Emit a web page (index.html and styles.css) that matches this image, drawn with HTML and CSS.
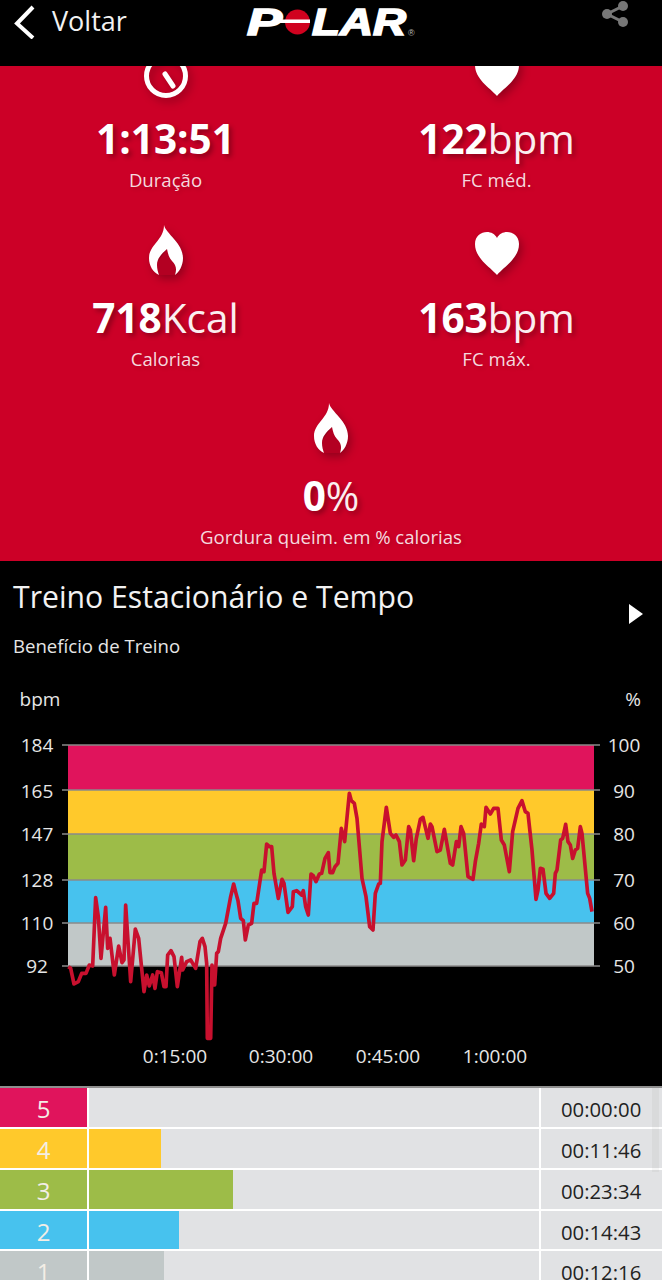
FILE: index.html
```html
<!DOCTYPE html>
<html lang="pt">
<head>
<meta charset="utf-8">
<title>Polar</title>
<link rel="stylesheet" href="styles.css">
</head>
<body>
<div class="page">
  <header class="topbar">
    <div class="back">
      <svg class="chevron" width="22" height="36" viewBox="0 0 22 36"><polyline points="19,4 3,20.5 19,35"/></svg>
      <span>Voltar</span>
    </div>
    <svg class="logo" width="180" height="44" viewBox="240 0 180 44" role="img" aria-label="Polar">
      <text class="logo-letters" x="247" y="35" textLength="35" lengthAdjust="spacingAndGlyphs">P</text>
      <text class="logo-letters" x="312" y="35" textLength="94" lengthAdjust="spacingAndGlyphs">LAR</text>
      <circle class="logo-dot" cx="297.5" cy="22" r="12.5"/>
      <rect class="logo-band" x="276" y="19.5" width="34" height="3.5"/>
      <text class="logo-reg" x="408" y="36">®</text>
    </svg>
    <svg class="share" width="30" height="28" viewBox="0 0 30 28">
      <path d="M22 6 L6 14 L22 22"/>
      <circle cx="22" cy="6" r="5"/><circle cx="6" cy="14" r="5"/><circle cx="22" cy="22" r="5"/>
    </svg>
  </header>

  <section class="stats">
    <div class="stat stat-first">
      <svg class="icon" width="50" height="50" viewBox="0 -5 50 50"><circle class="ring" cx="25" cy="25" r="19.5"/><path class="hand" d="M24 23 L32 35"/></svg>
      <div class="value"><b>1:13:51</b></div>
      <div class="label">Duração</div>
    </div>
    <div class="stat stat-first">
      <svg class="icon" width="50" height="50" viewBox="0 -3 50 50"><path class="solid" d="M25 47 C17 38 3 30 3 16 C3 8 9 4 15 4 C19 4 23 6 25 10 C27 6 31 4 35 4 C41 4 47 8 47 16 C47 30 33 38 25 47Z"/></svg>
      <div class="value"><b>122</b>bpm</div>
      <div class="label">FC méd.</div>
    </div>
    <div class="stat">
      <svg class="icon" width="50" height="50" viewBox="-8 0 50 50"><path class="inner" d="M9 50 L8 38 L18 24 L27 40 L26 50Z"/><path class="solid" d="M15 0 C17 9 34 18 34 33 C34 41 30 47 26 50 C28 44 27 40 23 36 C20 33 19 29 18 24 C12 29 8 34 8 40 C8 44 9 47 10 50 C4 47 0 41 0 33 C0 20 15 15 15 0Z"/></svg>
      <div class="value"><b>718</b>Kcal</div>
      <div class="label">Calorias</div>
    </div>
    <div class="stat">
      <svg class="icon" width="50" height="50" viewBox="0 -3 50 50"><path class="solid" d="M25 47 C17 38 3 30 3 16 C3 8 9 4 15 4 C19 4 23 6 25 10 C27 6 31 4 35 4 C41 4 47 8 47 16 C47 30 33 38 25 47Z"/></svg>
      <div class="value"><b>163</b>bpm</div>
      <div class="label">FC máx.</div>
    </div>
    <div class="stat stat-wide">
      <svg class="icon" width="50" height="50" viewBox="-8 0 50 50"><path class="inner" d="M9 50 L8 38 L18 24 L27 40 L26 50Z"/><path class="solid" d="M15 0 C17 9 34 18 34 33 C34 41 30 47 26 50 C28 44 27 40 23 36 C20 33 19 29 18 24 C12 29 8 34 8 40 C8 44 9 47 10 50 C4 47 0 41 0 33 C0 20 15 15 15 0Z"/></svg>
      <div class="value"><b>0</b>%</div>
      <div class="label">Gordura queim. em % calorias</div>
    </div>
  </section>

  <section class="training">
    <div class="title-row">
      <h2>Treino Estacionário e Tempo</h2>
      <svg class="play" width="14" height="20" viewBox="0 0 14 20"><path d="M0 0 L14 10 L0 20Z"/></svg>
    </div>
    <p class="subtitle">Benefício de Treino</p>
    <svg class="chart" width="662" height="400" viewBox="0 680 662 400">
      <rect class="z5" x="68" y="745" width="526" height="45"/>
      <rect class="z4" x="68" y="790" width="526" height="44"/>
      <rect class="z3" x="68" y="834" width="526" height="46"/>
      <rect class="z2" x="68" y="880" width="526" height="43"/>
      <rect class="z1" x="68" y="923" width="526" height="43"/>
      <g class="gridlines">
        <line x1="62" x2="600" y1="745" y2="745"/>
        <line x1="62" x2="600" y1="790" y2="790"/>
        <line x1="62" x2="600" y1="834" y2="834"/>
        <line x1="62" x2="600" y1="880" y2="880"/>
        <line x1="62" x2="600" y1="923" y2="923"/>
        <line x1="62" x2="600" y1="966" y2="966"/>
      </g>
      <g transform="translate(0 730) scale(0.33333)">
        <polyline class="hr" points="205,710 212,715 222,762 235,755 245,730 258,730 268,705 278,708 287,503 295,560 303,685 317,532 323,655 330,625 343,735 356,648 366,698 372,690 377,525 392,755 406,597 416,625 432,785 440,735 448,768 458,735 465,775 472,725 484,728 492,770 498,770 503,675 513,662 522,680 532,770 545,682 548,720 560,695 572,690 587,715 600,635 607,625 615,650 620,700 622,925 632,925 636,705 644,765 650,670 655,665 662,625 677,580 692,500 701,462 708,490 714,512 722,565 730,572 736,630 745,585 755,580 762,520 770,520 785,420 792,425 800,342 808,350 815,350 822,430 835,505 846,448 852,460 864,547 877,530 880,485 890,482 905,495 910,482 917,530 925,555 933,432 940,437 948,455 958,432 965,430 975,385 985,368 990,428 998,428 1005,410 1014,400 1024,295 1034,335 1048,190 1054,212 1063,220 1071,265 1086,445 1098,500 1109,590 1119,600 1126,490 1136,462 1141,460 1146,335 1159,232 1171,310 1181,322 1188,315 1198,335 1206,405 1216,390 1226,290 1231,300 1241,392 1249,325 1261,268 1269,262 1284,325 1291,282 1296,290 1311,365 1321,360 1333,298 1351,400 1358,405 1369,335 1376,350 1383,290 1391,310 1404,440 1419,448 1426,395 1436,340 1444,282 1453,290 1458,232 1471,252 1481,235 1494,235 1504,330 1513,345 1528,425 1538,305 1554,235 1566,212 1576,245 1584,250 1596,360 1608,508 1614,480 1621,415 1629,418 1638,490 1649,505 1661,490 1666,430 1671,420 1682,330 1688,325 1697,283 1704,335 1711,345 1718,385 1726,360 1733,355 1741,290 1746,310 1763,490 1769,505 1776,545"/>
      </g>
      <g class="axis">
        <text x="40" y="706">bpm</text>
        <text x="633" y="706">%</text>
        <text x="37" y="752">184</text>
        <text x="37" y="798">165</text>
        <text x="37" y="841">147</text>
        <text x="37" y="887">128</text>
        <text x="37" y="930">110</text>
        <text x="37" y="973">92</text>
        <text x="624" y="752">100</text>
        <text x="624" y="798">90</text>
        <text x="624" y="841">80</text>
        <text x="624" y="887">70</text>
        <text x="624" y="930">60</text>
        <text x="624" y="973">50</text>
        <text x="175" y="1063">0:15:00</text>
        <text x="281" y="1063">0:30:00</text>
        <text x="388" y="1063">0:45:00</text>
        <text x="495" y="1063">1:00:00</text>
      </g>
    </svg>
  </section>

  <section class="zones">
    <div class="zone"><div class="num z5">5</div><div class="track"></div><div class="time">00:00:00</div></div>
    <div class="zone"><div class="num z4">4</div><div class="track"><div class="bar z4" style="width:72px"></div></div><div class="time">00:11:46</div></div>
    <div class="zone"><div class="num z3">3</div><div class="track"><div class="bar z3" style="width:144px"></div></div><div class="time">00:23:34</div></div>
    <div class="zone"><div class="num z2">2</div><div class="track"><div class="bar z2" style="width:90px"></div></div><div class="time">00:14:43</div></div>
    <div class="zone"><div class="num z1">1</div><div class="track"><div class="bar z1" style="width:75px"></div></div><div class="time">00:12:16</div></div>
    <div class="scrollthumb"></div>
  </section>
</div>
</body>
</html>
```
FILE: styles.css
```css
* { box-sizing: border-box; }
html, body { margin: 0; padding: 0; background: #000; }
.page {
  width: 662px;
  height: 1280px;
  overflow: hidden;
  font-family: "Open Sans", "Noto Sans", sans-serif;
  color: #fff;
  background: #000;
}

/* top bar */
.topbar {
  height: 66px;
  background: #000;
  position: relative;
  z-index: 2;
  display: flex;
  justify-content: space-between;
  align-items: flex-start;
}
.back {
  display: flex;
  align-items: center;
  gap: 16px;
  padding: 1px 0 0 14px;
  font-size: 27px;
  line-height: 40px;
  color: #f2f2f2;
}
.chevron polyline { fill: none; stroke: #fff; stroke-width: 4; }
.logo { position: absolute; left: 240px; top: 0; }
.logo-letters {
  font-family: "Liberation Sans", sans-serif;
  font-weight: 700;
  font-style: italic;
  font-size: 36px;
  fill: #fff;
  stroke: #fff;
  stroke-width: 1.6;
}
.logo-dot { fill: #d0021f; }
.logo-band { fill: #fff; }
.logo-reg { font-family: "Liberation Sans", sans-serif; font-size: 9px; fill: #bbb; }
.share { margin: 0 31px 0 0; }
.share path { fill: none; stroke: #777; stroke-width: 3; }
.share circle { fill: #777; }

/* red stats panel */
.stats {
  height: 495px;
  overflow: hidden;
  background: #cc0027;
  display: grid;
  grid-template-columns: 331px 331px;
  grid-auto-rows: 178px;
  align-content: start;
  text-align: center;
}
.stat { display: flex; flex-direction: column; align-items: center; margin-top: -19px; }
.stat-first { margin-top: -20px; }
.stat-wide { grid-column: 1 / 3; }
.icon { display: block; overflow: visible; filter: drop-shadow(3px 4px 4px rgba(0,0,0,.28)); flex: none; }
.ring { fill: none; stroke: #fff; stroke-width: 5; }
.hand { fill: none; stroke: #fff; stroke-width: 5; stroke-linecap: round; }
.solid { fill: #fff; }
.inner { fill: #b30022; }
.value {
  margin-top: 16px;
  font-size: 40.5px;
  line-height: 54px;
  font-weight: 400;
  color: #fbeef0;
  text-shadow: 3px 3px 5px rgba(0,0,0,.3);
}
.value b { font-weight: 700; color: #fff; }
.label {
  margin-top: 1px;
  font-size: 18.6px;
  line-height: 26px;
  color: #f6d9df;
  text-shadow: 2px 2px 4px rgba(0,0,0,.15);
}

/* training section */
.training { height: 525px; background: #000; }
.title-row {
  display: flex;
  justify-content: space-between;
  align-items: flex-end;
  padding: 15px 19px 0 13px;
}
h2 { margin: 0; font-size: 30.2px; line-height: 42px; font-weight: 400; color: #f2f2f2; }
.play { fill: #fff; margin-bottom: -6px; }
.subtitle { margin: 16px 0 0 13px; font-size: 18.6px; line-height: 24px; color: #e6e6e6; }
.chart { display: block; margin-top: 22px; }
.gridlines line { stroke: #8a8a8a; stroke-width: 1.5; }
.hr { fill: none; stroke: #c8102e; stroke-width: 11; stroke-linejoin: round; }
.axis text { font-size: 19px; fill: #e6e6e6; text-anchor: middle; }
rect.z5, .z5 { background: #e0145c; fill: #e0145c; }
rect.z4, .z4 { background: #ffc92b; fill: #ffc92b; }
rect.z3, .z3 { background: #9dbc48; fill: #9dbc48; }
rect.z2, .z2 { background: #47c2ee; fill: #47c2ee; }
rect.z1, .z1 { background: #c1c8c8; fill: #c1c8c8; }

/* zones table */
.zones {
  position: relative;
  border-top: 2px solid #8f8f8f;
  background: #fff;
  height: 194px;
  display: grid;
  grid-auto-rows: 38.85px;
  row-gap: 2px;
}
.zone {
  display: grid;
  grid-template-columns: 87px 450px 121px;
  grid-template-rows: 38.85px;
  column-gap: 2px;
}
.num { font-size: 24px; line-height: 42px; height: 38.85px; text-align: center; color: #f3eee6; }
.track { background: #e1e2e4; }
.bar { height: 100%; }
.time { background: #e1e2e4; font-size: 20.3px; line-height: 42px; height: 38.85px; color: #222; padding-left: 20px; }
.scrollthumb {
  position: absolute;
  left: 652px;
  top: 0;
  width: 7px;
  height: 84px;
  background: rgba(0,0,0,.035);
}
```
